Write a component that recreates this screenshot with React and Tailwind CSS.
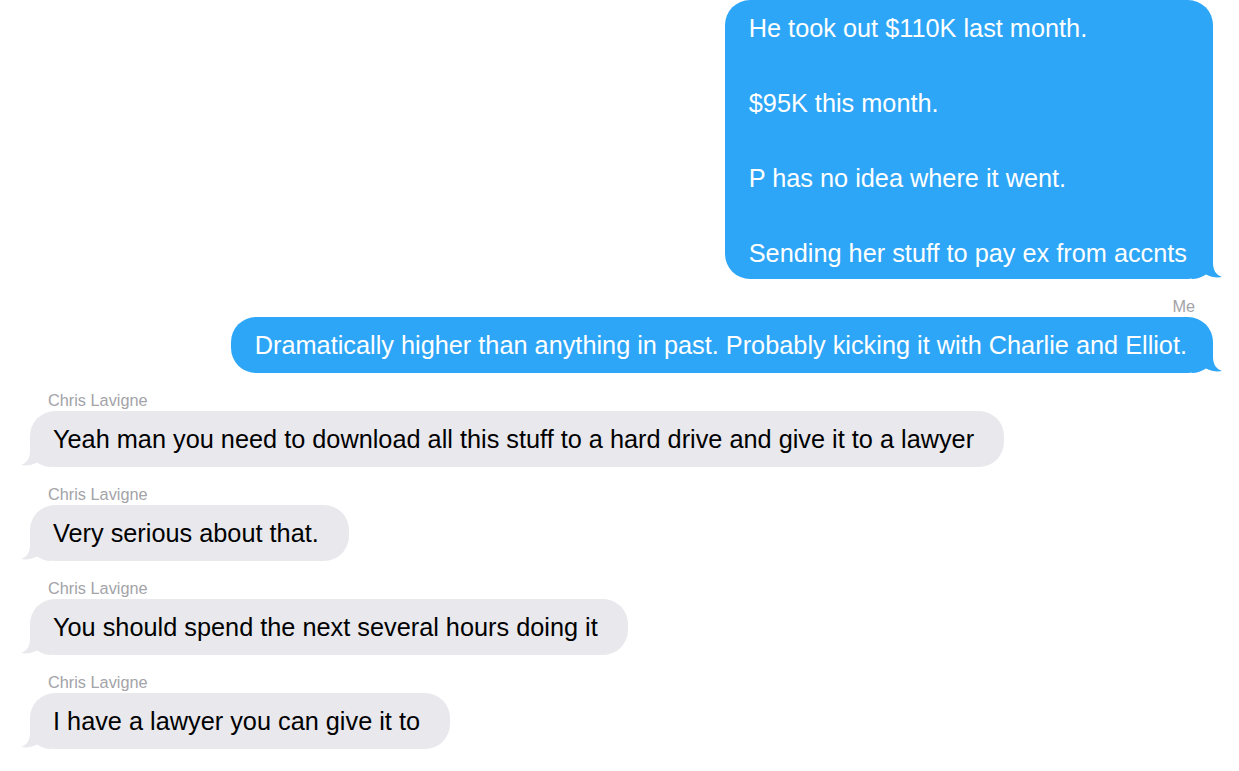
import React from "react"

const sent = [
  {
    id: 1,
    lines: ["He took out $110K last month.", "", "$95K this month.", "", "P has no idea where it went.", "", "Sending her stuff to pay ex from accnts"],
  },
  {
    id: 2,
    label: "Me",
    lines: ["Dramatically higher than anything in past. Probably kicking it with Charlie and Elliot."],
  },
]

const received = [
  "Yeah man you need to download all this stuff to a hard drive and give it to a lawyer",
  "Very serious about that.",
  "You should spend the next several hours doing it",
  "I have a lawyer you can give it to",
]

const Tail = ({ color, flip }) => (
  <svg
    width="30"
    height="24"
    viewBox="0 0 30 24"
    className={`absolute bottom-0 ${flip ? "left-[-9px] -scale-x-100" : "right-[-9px]"}`}
  >
    <path d="M0 0 H21 V8 C21 15 24 20 30 22 C25 23 19 22 14 19.5 C10 22 5 24 0 24 Z" fill={color} />
  </svg>
)

const SentBubble = ({ lines, first }) => (
  <div
    className={`relative self-end rounded-[25px] bg-[#2ea6f7] text-white pl-6 pr-[26px] text-[25.3px] ${
      first ? "leading-[37.5px] pt-[10px] pb-[6px]" : "leading-[38px] py-[9px]"
    }`}
  >
    {lines.map((l, i) => (
      <div key={i}>{l || "\u00a0"}</div>
    ))}
    <Tail color="#2ea6f7" />
  </div>
)

const Label = ({ children, right }) => (
  <div
    className={`mt-[19px] mb-[3px] text-[16.3px] leading-4 text-[#a3a3a8] ${right ? "self-end pr-[18px]" : "self-start pl-[18px]"}`}
  >
    {children}
  </div>
)

export default function App() {
  return (
    <div
      className="min-h-screen bg-white flex flex-col pl-[30px] pr-[26px]"
      style={{ fontFamily: '"Liberation Sans", Arial, sans-serif' }}
    >
      <SentBubble lines={sent[0].lines} first />
      <Label right>Me</Label>
      <SentBubble lines={sent[1].lines} />
      {received.map((msg, i) => (
        <React.Fragment key={i}>
          <Label>Chris Lavigne</Label>
          <div className="relative self-start rounded-[25px] bg-[#e8e8ed] text-black pl-[23px] pr-[30px] py-[9px] text-[25.3px] leading-[38px]">
            {msg}
            <Tail color="#e8e8ed" flip />
          </div>
        </React.Fragment>
      ))}
    </div>
  )
}
